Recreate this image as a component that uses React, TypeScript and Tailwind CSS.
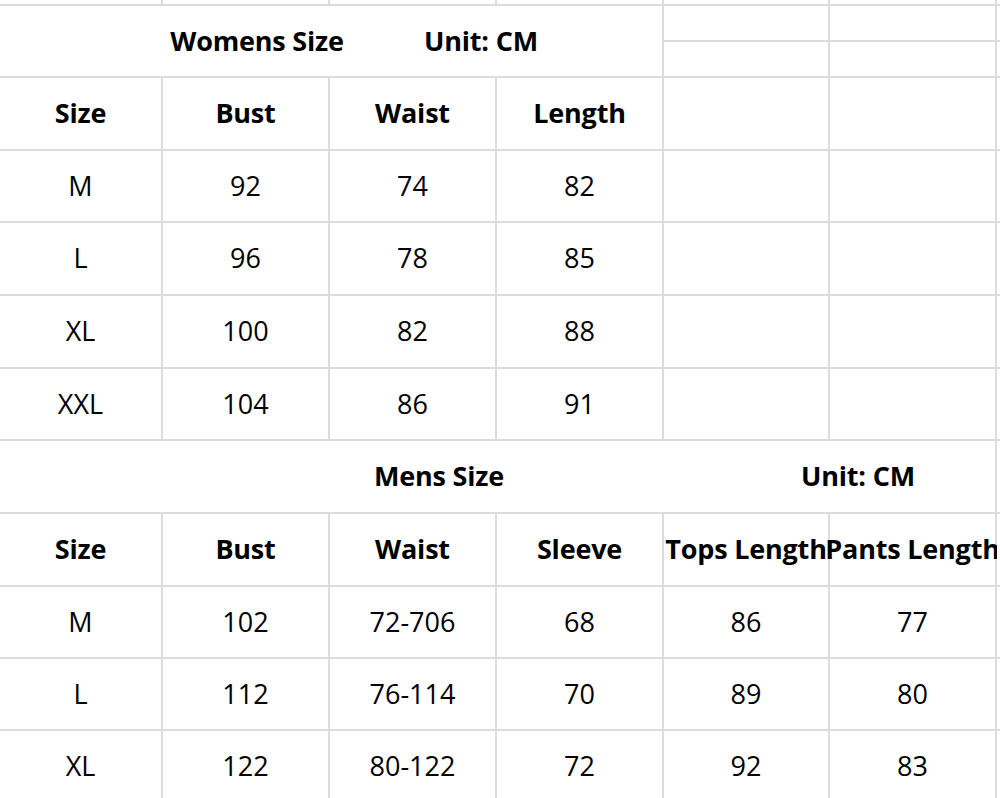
import React from "react";

const font = { fontFamily: '"Open Sans", "Noto Sans", "Liberation Sans", sans-serif' };

function Cell({ children, bold, className = "" }: { children?: React.ReactNode; bold?: boolean; className?: string }) {
  return (
    <div
      className={`bg-white flex items-center justify-center whitespace-nowrap text-black ${bold ? "font-bold text-[27px] tracking-[-0.2px]" : "text-[27px]"} ${className}`}
    >
      {children}
    </div>
  );
}

const womens = [
  ["M", "92", "74", "82"],
  ["L", "96", "78", "85"],
  ["XL", "100", "82", "88"],
  ["XXL", "104", "86", "91"],
];

const mens = [
  ["M", "102", "72-706", "68", "86", "77"],
  ["L", "112", "76-114", "70", "89", "80"],
  ["XL", "122", "80-122", "72", "92", "83"],
];

export default function App() {
  return (
    <div className="w-[1000px] h-[798px] overflow-hidden bg-white" style={font}>
      <div className="grid gap-[2px] bg-[#dcdcdc] w-[1004px] grid-cols-[161px_165px_165px_165px_164px_165px_1fr] grid-rows-[4px_34px_34px_71px_70px_71px_71px_70px_71px_71px_70px_70px_71px]">
        {/* partial top row */}
        {Array.from({ length: 7 }).map((_, i) => (
          <div key={"t" + i} className="bg-white" />
        ))}
        {/* womens title */}
        <div className="col-span-4 row-span-2 bg-white flex items-center pl-[157px] gap-[24px] font-bold text-[27px] tracking-[-0.2px] text-black whitespace-nowrap">
          <div className="w-[200px] text-center">Womens Size</div>
          <div className="w-[200px] text-center">Unit: CM</div>
        </div>
        <div className="bg-white" />
        <div className="bg-white" />
        <div className="bg-white" />
        <div className="bg-white" />
        <div className="bg-white" />
        <div className="bg-white" />
        {/* womens header */}
        <Cell bold>Size</Cell>
        <Cell bold>Bust</Cell>
        <Cell bold>Waist</Cell>
        <Cell bold>Length</Cell>
        <Cell />
        <Cell />
        <Cell />
        {womens.map((r, i) => (
          <React.Fragment key={"w" + i}>
            {r.map((v, j) => (
              <Cell key={j}>{v}</Cell>
            ))}
            <Cell />
            <Cell />
            <Cell />
          </React.Fragment>
        ))}
        {/* mens title */}
        <div className="col-span-6 bg-white flex items-center pl-[339px] gap-[219px] font-bold text-[27px] tracking-[-0.2px] text-black whitespace-nowrap">
          <div className="w-[200px] text-center">Mens Size</div>
          <div className="w-[200px] text-center">Unit: CM</div>
        </div>
        <div className="bg-white" />
        {/* mens header */}
        <Cell bold>Size</Cell>
        <Cell bold>Bust</Cell>
        <Cell bold>Waist</Cell>
        <Cell bold>Sleeve</Cell>
        <Cell bold className="overflow-visible">Tops Length</Cell>
        <Cell bold className="overflow-visible">Pants Length</Cell>
        <Cell />
        {mens.map((r, i) => (
          <React.Fragment key={"m" + i}>
            {r.map((v, j) => (
              <Cell key={j}>{v}</Cell>
            ))}
            <Cell />
          </React.Fragment>
        ))}
      </div>
    </div>
  );
}
